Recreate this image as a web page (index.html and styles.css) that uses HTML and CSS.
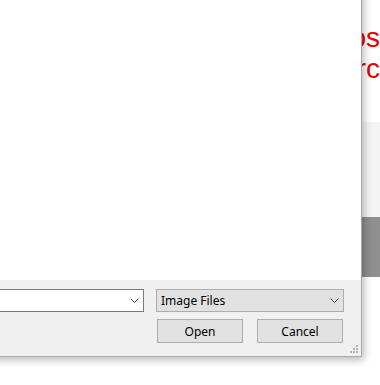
FILE: index.html
```html
<!DOCTYPE html>
<html lang="en">
<head>
    <meta charset="UTF-8">
    <title>Open</title>
    <link rel="stylesheet" href="styles.css">
</head>
<body>
    <div class="page">
        <div class="notice">
            <p>Browse your photos</p>
            <p>Photos by Marc</p>
        </div>
        <div class="band-light"></div>
        <div class="band-dark"></div>
    </div>

    <div class="dialog">
        <div class="file-list"></div>
        <div class="footer">
            <div class="combo combo-name">
                <span class="combo-text"></span>
                <svg class="chevron" width="9" height="5" viewBox="0 0 9 5"><path d="M0.5 0.5 L4.5 4.5 L8.5 0.5" fill="none" stroke="#444" stroke-width="1"/></svg>
            </div>
            <div class="combo combo-type">
                <span class="combo-text">Image Files</span>
                <svg class="chevron" width="9" height="5" viewBox="0 0 9 5"><path d="M0.5 0.5 L4.5 4.5 L8.5 0.5" fill="none" stroke="#444" stroke-width="1"/></svg>
            </div>
            <div class="buttons">
                <button class="btn">Open</button>
                <button class="btn">Cancel</button>
            </div>
            <svg class="grip" width="9" height="9" viewBox="0 0 9 9">
                <rect x="7" y="1" width="2" height="2" fill="#b4b4b4"/>
                <rect x="4" y="4" width="2" height="2" fill="#b4b4b4"/>
                <rect x="7" y="4" width="2" height="2" fill="#b4b4b4"/>
                <rect x="1" y="7" width="2" height="2" fill="#b4b4b4"/>
                <rect x="4" y="7" width="2" height="2" fill="#b4b4b4"/>
                <rect x="7" y="7" width="2" height="2" fill="#b4b4b4"/>
            </svg>
        </div>
    </div>
</body>
</html>
```

FILE: styles.css
```css
body {
    margin: 0;
    padding: 0;
    background-color: #fff;
    font-family: "Noto Sans", "Open Sans", sans-serif;
    overflow: hidden;
}
.page {
    width: 380px;
    height: 385px;
}
.notice {
    padding-top: 22px;
    height: 122px;
    box-sizing: border-box;
    white-space: nowrap;
    text-align: right;
}
.notice p {
    margin: 0;
    font-family: "Liberation Sans", Arial, sans-serif;
    font-size: 28px;
    line-height: 31px;
    color: #e60000;
}
.band-light {
    height: 95px;
    background-color: #f4f4f4;
}
.band-dark {
    height: 60px;
    background-color: #8f8f8f;
}
.dialog {
    position: absolute;
    left: -240px;
    top: -100px;
    width: 601px;
    height: 456px;
    display: flex;
    flex-direction: column;
    background: #f0f0f0;
    border-right: 1px solid #a8a8a8;
    border-bottom: 1px solid #a8a8a8;
    box-shadow: 2px 3px 8px rgba(0, 0, 0, 0.28);
}
.file-list {
    flex: 1;
    background: #fff;
}
.footer {
    position: relative;
    height: 76px;
    box-sizing: border-box;
    padding: 9px 17px 0 0;
    display: grid;
    grid-template-columns: 1fr 188px;
    grid-template-rows: 23px 24px;
    column-gap: 12px;
    row-gap: 7px;
    font-size: 12px;
    color: #000;
}
.combo {
    display: flex;
    align-items: center;
    justify-content: space-between;
    padding: 0 4px;
    box-sizing: border-box;
    height: 23px;
}
.combo-name {
    grid-column: 1;
    grid-row: 1;
    background: #fff;
    border: 1px solid #7a7a7a;
}
.combo-type {
    grid-column: 2;
    grid-row: 1;
    background: #e1e1e1;
    border: 1px solid #adadad;
}
.buttons {
    grid-column: 2;
    grid-row: 2;
    display: flex;
    justify-content: space-between;
    padding: 0 1px;
}
.btn {
    width: 86px;
    height: 24px;
    background: #e1e1e1;
    border: 1px solid #adadad;
    border-radius: 0;
    font-family: "Noto Sans", "Open Sans", sans-serif;
    font-size: 12px;
    color: #000;
    padding: 0;
}
.grip {
    position: absolute;
    right: 3px;
    bottom: 3px;
}
```
